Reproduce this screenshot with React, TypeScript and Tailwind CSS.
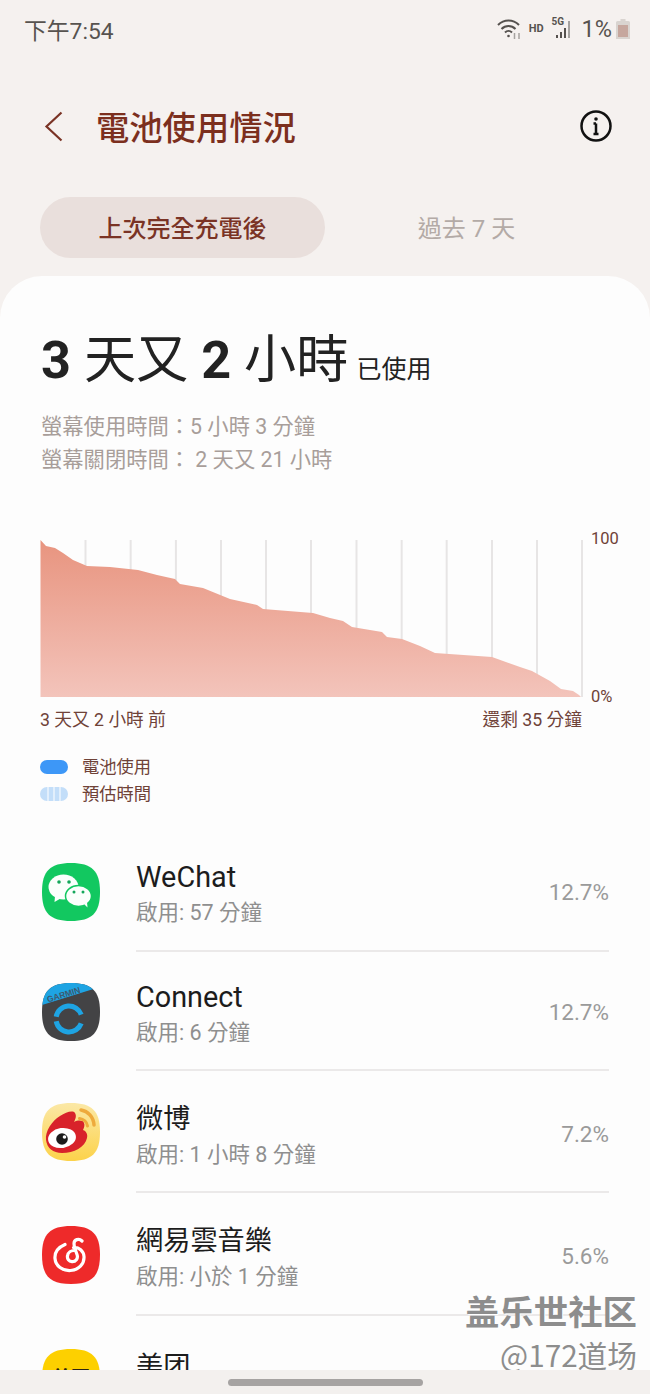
const FONT = "Roboto, 'Noto Sans CJK TC', sans-serif";
const FONT_SC = "'Noto Sans CJK SC', sans-serif";

const CURVE =
  "M0.5 0 L6 6 L15 8 L23 13 L33 20 L47 26 L70 27 L98 30 L117 35 L135 39 L140 44 L163 48 L190 59 L217 65 L223 69 L273 73 L290 78 L303 81 L312 87 L342 92 L347 97 L362 99 L380 106 L395 113 L452 117 L480 127 L492 131 L510 141 L521 149 L533 151 L539 155 L541 157 L0.5 157 Z";

const GRID_X = [45.5, 90.7, 135.9, 181, 226, 271, 316.5, 361.7, 406.7, 452, 497, 542];

const SQUIRCLE = "M29 0C50 0 58 8 58 29S50 58 29 58 0 50 0 29 8 0 29 0Z";

function WeChatIcon() {
  return (
    <svg width="58" height="58" viewBox="0 0 58 58">
      <path d={SQUIRCLE} fill="#12c860" />
      <ellipse cx="21.500" cy="24" rx="15" ry="12.500" fill="#fbfffc" />
      <path d="M13 33l-.5 6 6-3.500Z" fill="#fbfffc" />
      <ellipse cx="36.500" cy="33" rx="13" ry="10.500" fill="#fbfffc" stroke="#12c860" strokeWidth="1.500" />
      <path d="M42 41l3.500 3.500-.5-5.500Z" fill="#fbfffc" />
      <circle cx="17" cy="19" r="1.800" fill="#14a75a" />
      <circle cx="27" cy="19" r="1.800" fill="#14a75a" />
      <circle cx="32" cy="29" r="1.500" fill="#14a75a" />
      <circle cx="41" cy="29" r="1.500" fill="#14a75a" />
    </svg>
  );
}

function GarminIcon() {
  return (
    <svg width="58" height="58" viewBox="0 0 58 58">
      <defs>
        <clipPath id="garmin-clip">
          <path d={SQUIRCLE} />
        </clipPath>
      </defs>
      <path d={SQUIRCLE} fill="#434345" />
      <path d="M0 22 58 4V-2H0Z" fill="#1ea4e3" clipPath="url(#garmin-clip)" />
      <text x="6" y="19.500" fontSize="8.500" fontWeight="700" fill="#3c5a70" fontFamily="'Liberation Sans', sans-serif" transform="rotate(-17 6 19.500)">
        GARMIN
      </text>
      <path d="M39.200 31.600A13 13 0 0 0 14.200 33.700" fill="none" stroke="#1ea4e3" strokeWidth="5" />
      <path d="M14.200 38.300A13 13 0 0 0 39.200 40.400" fill="none" stroke="#1ea4e3" strokeWidth="5" />
    </svg>
  );
}

function WeiboIcon() {
  return (
    <svg width="58" height="58" viewBox="0 0 58 58">
      <defs>
        <linearGradient id="wb" x1="0" y1="0" x2="0" y2="1">
          <stop offset="0" stopColor="#fbe8a6" />
          <stop offset="1" stopColor="#fcd24a" />
        </linearGradient>
      </defs>
      <path d={SQUIRCLE} fill="url(#wb)" />
      <path d="M4 37C3 28 10 18 18 13 24 9 31 7 33 10 35 13 33 17 32 19 36 17 41 17 42 20 43 22 42 25 41 27 44 28 46 31 45 35 43 44 32 50 20 50 11 50 5 45 4 37Z" fill="#d8222a" />
      <ellipse cx="20" cy="35" rx="14" ry="10" fill="#fff" transform="rotate(-8 20 35)" />
      <circle cx="20" cy="36" r="5.800" fill="#1c1c1c" />
      <circle cx="22.500" cy="34" r="1.800" fill="#fff" />
      <path d="M39 7c7 1 12.500 7 13 15" fill="none" stroke="#eeaa3c" strokeWidth="3.500" strokeLinecap="round" />
      <path d="M37.500 15.500c4 .5 7.500 3.500 8 7.500" fill="none" stroke="#eeaa3c" strokeWidth="3" strokeLinecap="round" />
    </svg>
  );
}

function NeteaseIcon() {
  return (
    <svg width="58" height="58" viewBox="0 0 58 58">
      <path d={SQUIRCLE} fill="#ee2a2a" />
      <path
        d="M40 15c-3-3-8-1.500-8 2.500 0 3 1.500 7 3 11 1.500 4-1.500 7.500-5 7.200-3.200-.3-5-3-4.500-5.800.5-3.500 3.800-5.600 7-5.400M23 18.500c-7 3-10.500 8-10 14 .6 7.500 7.500 12.500 15.500 12 8-.5 14-6.500 13.500-14-.4-5.500-5-9.500-10.500-9"
        fill="none"
        stroke="#fff"
        strokeWidth="3.200"
        strokeLinecap="round"
      />
    </svg>
  );
}

function MeituanIcon() {
  return (
    <svg width="58" height="58" viewBox="0 0 58 58">
      <path d={SQUIRCLE} fill="#fdd000" />
      <text x="10" y="36" fontSize="19" fontWeight="700" fill="#2b2412" fontFamily={FONT_SC}>
        美团
      </text>
    </svg>
  );
}

const APPS = [
  { name: "WeChat", nameSize: "text-[28.800px]", sub: "啟用: 57 分鐘", pct: "12.7%", icon: <WeChatIcon />, h: "h-[119px]", textTop: "pt-[2px]", iconPad: "pb-[2px]" },
  { name: "Connect", nameSize: "text-[28.800px]", sub: "啟用: 6 分鐘", pct: "12.7%", icon: <GarminIcon />, h: "h-[119px]", textTop: "pt-[4px]", iconPad: "" },
  { name: "微博", nameSize: "text-[27.200px]", sub: "啟用: 1 小時 8 分鐘", pct: "7.2%", icon: <WeiboIcon />, h: "h-[122px]", textTop: "pt-[7px]", iconPad: "" },
  { name: "網易雲音樂", nameSize: "text-[27.200px]", sub: "啟用: 小於 1 分鐘", pct: "5.6%", icon: <NeteaseIcon />, h: "h-[123px]", textTop: "pt-[7px]", iconPad: "" },
];

function StatusBar() {
  return (
    <div className="flex h-[62px] items-center justify-between pl-[24px] pr-[20px] text-[#57534f]">
      <span className="mt-[3px] text-[22.800px] leading-none">下午7:54</span>
      <div className="mb-[4px] flex items-center">
        <svg width="25" height="22" viewBox="0 0 23 22" fill="none" stroke="#55514e" strokeWidth="2">
          <path d="M1 7c6-6 15-6 21 0" />
          <path d="M4.500 11c4-4 10-4 14 0" />
          <path d="M8 14.500c2-2 5-2 7 0" />
          <circle cx="11.500" cy="18" r="1.300" fill="#55514e" stroke="none" />
          <path d="M17.500 15v6M22 21v-6" stroke="#a6a3a0" strokeWidth="1.500" />
        </svg>
        <span className="ml-[8px] text-[11px] font-bold">HD</span>
        <div className="relative ml-[8px] h-[22px] w-[24px]">
          <span className="absolute left-0 top-[-1px] text-[10px] font-bold leading-none">5G</span>
          <svg className="absolute left-[3px] top-0" width="20" height="22" viewBox="0 0 20 22" fill="#55514e">
            <rect x="1" y="17" width="2" height="3" />
            <rect x="5" y="14" width="2" height="6" />
            <rect x="9" y="10" width="2" height="10" />
            <rect x="13" y="3" width="2" height="17" fill="#a6a3a0" />
          </svg>
        </div>
        <span className="ml-[6px] mt-[2px] text-[23.500px] leading-none">1%</span>
        <svg className="ml-[4px]" width="14" height="20" viewBox="0 0 14 20">
          <path d="M4.500 0h5v2h3a1.500 1.500 0 0 1 1.500 1.500V20H0V3.500A1.500 1.500 0 0 1 1.500 2h3Z" fill="#d9d4d0" />
          <rect x="2" y="6" width="10" height="12" fill="#c6a79e" />
        </svg>
      </div>
    </div>
  );
}

function Header() {
  return (
    <div className="flex h-[135px] items-start justify-between pl-[44px] pr-[38px]">
      <div className="flex items-start">
        <svg className="mt-[49px]" width="19" height="31" viewBox="0 0 19 31" fill="none" stroke="#7a3325" strokeWidth="2.200">
          <path d="M17.500 1.500 2.500 15.500l15 14" />
        </svg>
        <h1 className="ml-[33px] mt-[50px] text-[33.300px] font-medium leading-none text-[#7c2f1e]">電池使用情況</h1>
      </div>
      <svg className="mt-[48px]" width="32" height="32" viewBox="0 0 32 32" fill="none" stroke="#111" strokeWidth="2.500">
        <circle cx="16" cy="16" r="14.500" />
        <path d="M16 13.500V24M13.500 13.500H16M13.500 24h5" />
        <circle cx="16" cy="9" r="1.800" fill="#111" stroke="none" />
      </svg>
    </div>
  );
}

function Tabs() {
  return (
    <div className="flex pl-[40px]">
      <div className="flex h-[61px] w-[285px] items-center justify-center rounded-full bg-[#e9dfdc] pt-[2px] text-[24px] font-medium text-[#7a3325]">
        上次完全充電後
      </div>
      <div className="flex h-[61px] w-[283px] items-center justify-center pt-[2px] text-[24px] text-[#b3aaa6]">過去 7 天</div>
    </div>
  );
}

function Chart() {
  return (
    <div className="mt-[64px] pl-[40px]">
      <div className="flex items-start">
        <svg width="544" height="158" viewBox="0 0 544 158" className="shrink-0">
          <defs>
            <linearGradient id="area" x1="0" y1="0" x2="0" y2="1">
              <stop offset="0" stopColor="#e8947f" />
              <stop offset="1" stopColor="#f3c4bb" />
            </linearGradient>
          </defs>
          {GRID_X.map((x) => (
            <rect key={x} x={x - 1} y="0" width="2" height="157" fill="#e7e5e5" />
          ))}
          <path d={CURVE} fill="url(#area)" />
        </svg>
        <div className="ml-[7px] flex h-[166px] flex-col justify-between text-[16.500px] leading-[20px] text-[#6f4238]">
          <span className="mt-[-11px]">100</span>
          <span className="mb-[-1px]">0%</span>
        </div>
      </div>
      <div className="mt-[4px] flex w-[542px] justify-between text-[17.700px] leading-[20px] text-[#6f4238]">
        <span>3 天又 2 小時 前</span>
        <span>還剩 35 分鐘</span>
      </div>
      <div className="mt-[27px] flex flex-col gap-[7px] text-[17.300px] leading-[20px] text-[#6f4238]">
        <div className="flex items-center">
          <span className="h-[14px] w-[28px] rounded-full bg-[#3d97f7]" />
          <span className="ml-[14px]">電池使用</span>
        </div>
        <div className="flex items-center">
          <svg width="28" height="14" viewBox="0 0 28 14">
            <rect width="28" height="14" rx="7" fill="#c3def9" />
            <path d="M8 0v14M14 0v14M20 0v14" stroke="#fff" strokeWidth="1.500" opacity="0.7" />
          </svg>
          <span className="ml-[14px]">預估時間</span>
        </div>
      </div>
    </div>
  );
}

function AppRow({ name, nameSize, sub, pct, icon, h, textTop, iconPad }: (typeof APPS)[number]) {
  return (
    <div className={`flex items-center ${h}`}>
      <div className={`w-[96px] shrink-0 pl-[2px] ${iconPad}`}>{icon}</div>
      <div className={`flex h-full grow items-center justify-between border-b-2 border-[#ebe9e9] ${textTop}`}>
        <div>
          <div className={`${nameSize} leading-[36px] text-[#1c1c1c]`}>{name}</div>
          <div className="mt-[4px] text-[21.500px] leading-[28px] text-[#8f8f8f]">{sub}</div>
        </div>
        <span className="text-[22.500px] text-[#9a9a9a]">{pct}</span>
      </div>
    </div>
  );
}

function AppList() {
  return (
    <div className="mt-[29px] pl-[40px] pr-[41px]">
      {APPS.map((a) => (
        <AppRow key={a.name} {...a} />
      ))}
      <div className="flex pt-[33px]">
        <div className="w-[96px] shrink-0 pl-[2px]">
          <MeituanIcon />
        </div>
        <div className="text-[27.200px] leading-[36px] text-[#1c1c1c]">美团</div>
      </div>
    </div>
  );
}

export default function App() {
  return (
    <div className="relative h-[1394px] w-[650px] overflow-hidden bg-[#f5f1ef]" style={{ fontFamily: FONT }}>
      <StatusBar />
      <Header />
      <Tabs />
      <div className="mt-[18px] rounded-t-[42px] bg-[#fdfdfd] pt-[50px]">
        <div className="pl-[41px]">
          <div className="flex items-baseline text-[#222]">
            <span className="text-[52.200px] leading-[70px]">
              <b className="font-bold">3</b> 天又 <b className="font-bold">2</b> 小時
            </span>
            <span className="ml-[8px] text-[25px]">已使用</span>
          </div>
          <div className="mt-[14px] text-[21.300px] leading-[33px] text-[#a89e9a]">
            <div>螢幕使用時間：5 小時 3 分鐘</div>
            <div>螢幕關閉時間： 2 天又 21 小時</div>
          </div>
        </div>
        <Chart />
        <AppList />
      </div>

      {/* watermark sits over the list */}
      <div className="absolute bottom-[16px] right-[13px] flex flex-col items-end text-[#8d8d8d]" style={{ fontFamily: FONT_SC }}>
        <span className="text-[34.400px] font-bold leading-[44px] [text-shadow:1px_1px_0_#fff]">盖乐世社区</span>
        <span className="text-[29.700px] leading-[46px]">@172道场</span>
      </div>

      <div className="absolute inset-x-0 bottom-0 flex h-[24px] items-center justify-center bg-[#f3f0ee]">
        <span className="h-[7px] w-[195px] rounded-full bg-[#a6a3a2]" />
      </div>
    </div>
  );
}
